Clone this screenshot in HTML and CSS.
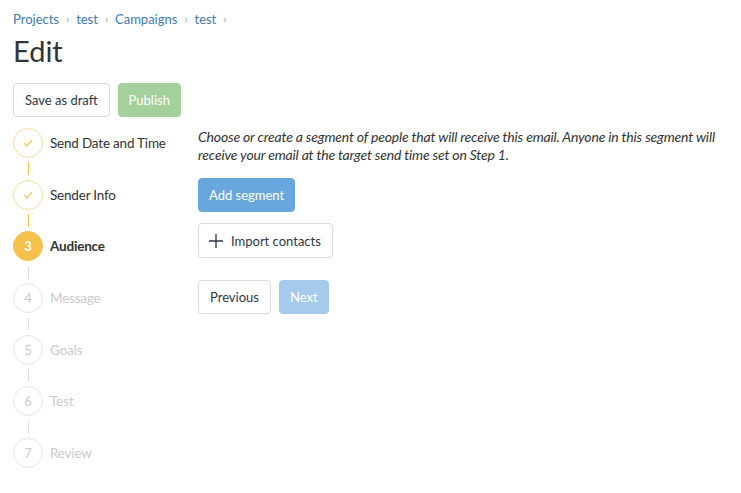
FILE: index.html
```html
<!DOCTYPE html>
<html>
<head>
<meta charset="utf-8">
<link rel="stylesheet" href="styles.css">
</head>
<body>
<div class="page">
  <nav class="crumbs">
    <a href="#">Projects</a><span class="sep">›</span>
    <a href="#">test</a><span class="sep">›</span>
    <a href="#">Campaigns</a><span class="sep">›</span>
    <a href="#">test</a><span class="sep">›</span>
  </nav>
  <h1 class="title">Edit</h1>
  <div class="actions">
    <button class="btn">Save as draft</button>
    <button class="btn btn-green">Publish</button>
  </div>
  <div class="main">
    <ol class="steps">
      <li class="step done"><span class="dot"><svg width="12" height="10" viewBox="0 0 12 10"><path d="M2 5.2 L4.9 7.9 L10 2.2" fill="none" stroke="#f2bf45" stroke-width="1.1"/></svg></span><span class="label">Send Date and Time</span></li>
      <li class="link done"></li>
      <li class="step done"><span class="dot"><svg width="12" height="10" viewBox="0 0 12 10"><path d="M2 5.2 L4.9 7.9 L10 2.2" fill="none" stroke="#f2bf45" stroke-width="1.1"/></svg></span><span class="label">Sender Info</span></li>
      <li class="link done"></li>
      <li class="step active"><span class="dot">3</span><span class="label">Audience</span></li>
      <li class="link"></li>
      <li class="step"><span class="dot">4</span><span class="label">Message</span></li>
      <li class="link"></li>
      <li class="step"><span class="dot">5</span><span class="label">Goals</span></li>
      <li class="link"></li>
      <li class="step"><span class="dot">6</span><span class="label">Test</span></li>
      <li class="link"></li>
      <li class="step"><span class="dot">7</span><span class="label">Review</span></li>
    </ol>
    <section class="content">
      <p class="intro">Choose or create a segment of people that will receive this email. Anyone in this segment will receive your email at the target send time set on Step 1.</p>
      <div class="row first"><button class="btn btn-blue">Add segment</button></div>
      <div class="row"><button class="btn btn-icon"><svg width="16" height="16" viewBox="0 0 16 16"><path d="M8 1 V15 M1 8 H15" stroke="#2d3748" stroke-width="1.3" fill="none"/></svg>Import contacts</button></div>
      <div class="row nav"><button class="btn">Previous</button><button class="btn btn-pale">Next</button></div>
    </section>
  </div>
</div>
</body>
</html>
```
FILE: styles.css
```css
* { box-sizing: border-box; }
html, body { margin: 0; padding: 0; background: #fff; }
body { font-family: Lato, "Noto Sans", sans-serif; font-size: 13px; color: #333; }
.page { padding: 9px 13px 0 13px; }
.crumbs { display: flex; align-items: center; line-height: 20px; font-size: 13px; }
.crumbs a { color: #3d7ab8; text-decoration: none; }
.crumbs .sep { color: #8a9bb0; font-size: 11px; margin: 0 7px; }
.title { margin: 4px 0 0 0; font-size: 29px; line-height: 36px; font-weight: 400; color: #333; }
.actions { display: flex; gap: 8px; margin-top: 14px; }
.btn { font-family: inherit; font-size: 13px; height: 34px; padding: 0 11px; border: 1px solid #dcdcdc; border-radius: 4px; background: #fff; color: #2d3748; display: inline-flex; align-items: center; }
.btn-green { background: #a4d09c; border-color: #a4d09c; color: #fff; padding: 0 10px; }
.btn-blue { background: #68a7dd; border-color: #68a7dd; color: #fff; padding: 0 10px; }
.btn-pale { background: #a5caeb; border-color: #a5caeb; color: #fff; padding: 0 10px; }
.btn-icon { gap: 7px; padding: 0 11px 0 9px; height: 35px; }
.main { display: flex; margin-top: 11px; }
.steps { list-style: none; margin: 0; padding: 0; width: 185px; flex: none; }
.step { display: flex; align-items: center; height: 30px; }
.dot { width: 30px; height: 30px; border-radius: 50%; border: 1px solid #e6e6e6; display: flex; align-items: center; justify-content: center; color: #ccc; font-size: 13px; flex: none; }
.label { margin-left: 7px; color: #ccc; font-size: 13.5px; letter-spacing: -0.2px; }
.step.done .dot { border-color: #f8dd9c; }
.step.done .label { color: #333; }
.step.active .dot { background: #f5c14b; border-color: #f5c14b; color: #fff; font-weight: 700; }
.step.active .label { color: #333; font-weight: 700; }
.link { height: 21.67px; display: flex; align-items: center; padding-left: 14.5px; }
.link::before { content: ""; display: block; width: 1px; height: 13px; background: #e0e0e0; }
.link.done::before { background: #f5c14b; }
.content { flex: 1; }
.intro { margin: 0; font-size: 14px; font-style: italic; line-height: 18px; letter-spacing: -0.18px; color: #333; }
.row { display: flex; gap: 8px; margin-top: 11px; }
.row.first { margin-top: 14px; }
.row.nav { margin-top: 22px; }
```
